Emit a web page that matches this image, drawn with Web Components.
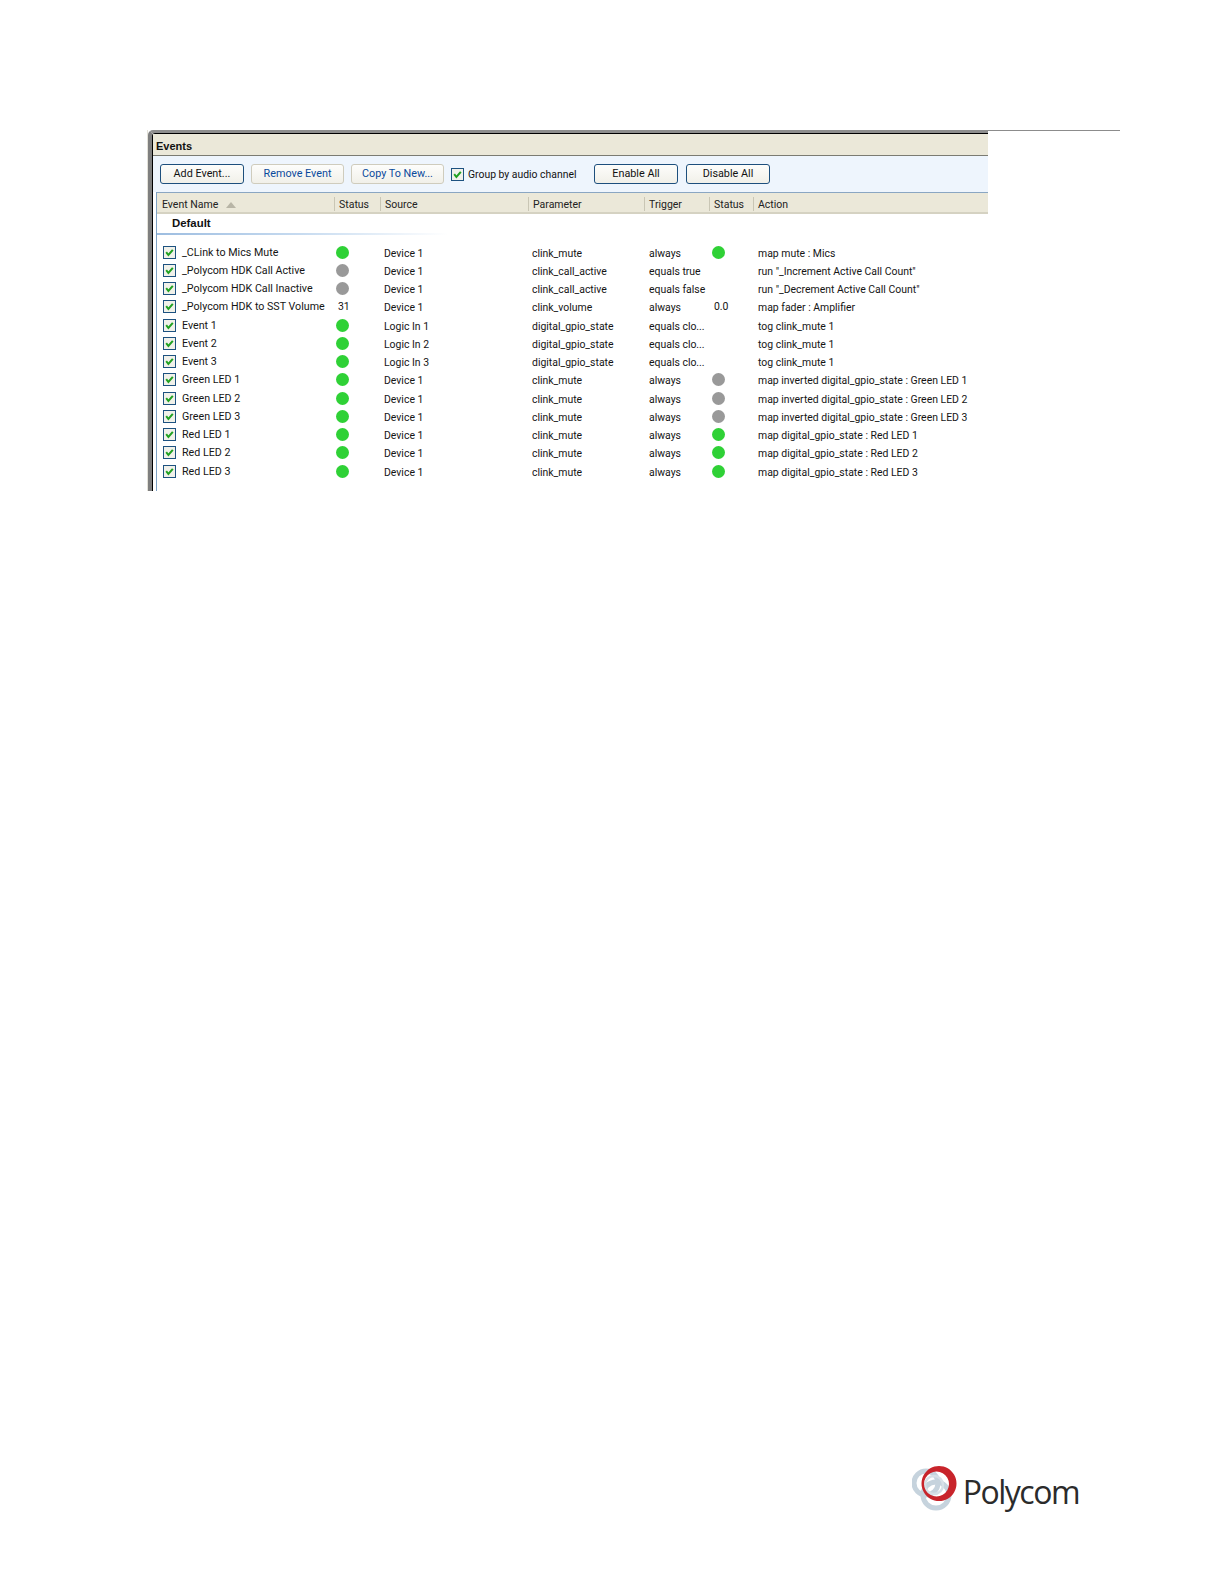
<!DOCTYPE html>
<html>
<head>
<meta charset="utf-8">
<title>Events</title>
<style>
  body{ margin:0; background:#fff; font-family:Roboto,"Liberation Sans",Arial,sans-serif; }
</style>
</head>
<body>
<polycom-page>
  <events-window>
    <tool-btn slot="tools" primary>Add Event...</tool-btn>
    <tool-btn slot="tools" w="93" off>Remove Event</tool-btn>
    <tool-btn slot="tools" w="93" off>Copy To New...</tool-btn>
    <group-check slot="tools">Group by audio channel</group-check>
    <tool-btn slot="tools" primary w="84" gap="18">Enable All</tool-btn>
    <tool-btn slot="tools" primary w="84">Disable All</tool-btn>

    <event-row name="_CLink to Mics Mute" st="on" src="Device 1" par="clink_mute" trig="always" st2="on" act="map mute : Mics"></event-row>
    <event-row name="_Polycom HDK Call Active" st="off" src="Device 1" par="clink_call_active" trig="equals true" act="run &quot;_Increment Active Call Count&quot;"></event-row>
    <event-row name="_Polycom HDK Call Inactive" st="off" src="Device 1" par="clink_call_active" trig="equals false" act="run &quot;_Decrement Active Call Count&quot;"></event-row>
    <event-row name="_Polycom HDK to SST Volume" val="31" src="Device 1" par="clink_volume" trig="always" val2="0.0" act="map fader : Amplifier"></event-row>
    <event-row name="Event 1" st="on" src="Logic In 1" par="digital_gpio_state" trig="equals clo..." act="tog clink_mute 1"></event-row>
    <event-row name="Event 2" st="on" src="Logic In 2" par="digital_gpio_state" trig="equals clo..." act="tog clink_mute 1"></event-row>
    <event-row name="Event 3" st="on" src="Logic In 3" par="digital_gpio_state" trig="equals clo..." act="tog clink_mute 1"></event-row>
    <event-row name="Green LED 1" st="on" src="Device 1" par="clink_mute" trig="always" st2="off" act="map inverted digital_gpio_state : Green LED 1"></event-row>
    <event-row name="Green LED 2" st="on" src="Device 1" par="clink_mute" trig="always" st2="off" act="map inverted digital_gpio_state : Green LED 2"></event-row>
    <event-row name="Green LED 3" st="on" src="Device 1" par="clink_mute" trig="always" st2="off" act="map inverted digital_gpio_state : Green LED 3"></event-row>
    <event-row name="Red LED 1" st="on" src="Device 1" par="clink_mute" trig="always" st2="on" act="map digital_gpio_state : Red LED 1"></event-row>
    <event-row name="Red LED 2" st="on" src="Device 1" par="clink_mute" trig="always" st2="on" act="map digital_gpio_state : Red LED 2"></event-row>
    <event-row name="Red LED 3" st="on" src="Device 1" par="clink_mute" trig="always" st2="on" act="map digital_gpio_state : Red LED 3"></event-row>
  </events-window>
  <polycom-logo slot="logo"></polycom-logo>
</polycom-page>

<script>
const COLS = "177px 46px 148px 116px 65px 44px 1fr";

class PolycomPage extends HTMLElement{
    constructor(){
        super()
        this.attachShadow({ mode: "open" });
        this.shadowRoot.innerHTML = `
          <style>
            :host{ display:flex; flex-direction:column; height:1585px; box-sizing:border-box; padding:130px 105px 72px 147px; overflow:hidden; }
            .top{ display:flex; align-items:flex-start; }
            .rule{ flex:1; height:1px; background:#8c8c8c; }
            .bottom{ margin-top:auto; display:flex; justify-content:flex-end; margin-right:41px; }
          </style>
          <div class="top"><slot></slot><div class="rule"></div></div>
          <div class="bottom"><slot name="logo"></slot></div>
        `;
    }
}

class EventsWindow extends HTMLElement{
    constructor(){
        super()
        this.attachShadow({ mode: "open" });
        const heads = [["Event Name",true],["Status"],["Source"],["Parameter"],["Trigger"],["Status"],["Action"]]
        const cells = heads.map(h => `<div class="hc">${h[0]}${h[1] ? '<svg width="10" height="6" viewBox="0 0 10 6"><path d="M0 6L5 0L10 6Z" fill="#b8b5a6"/></svg>' : ''}</div>`).join("")
        this.shadowRoot.innerHTML = `
          <style>
            :host{ display:block; width:841px; height:361px; box-sizing:border-box; font-size:10.5px; color:#111; flex:none;
                   background:#fff; border-left:1px solid #e3e1d8; overflow:hidden; }
            .frame{ height:100%; box-sizing:border-box; border-top:3px solid #8e8e8e; border-left:4px solid #7f7f7f; border-top-left-radius:5px; }
            .inner{ height:100%; box-sizing:border-box; border-top:1px solid #000; border-left:1px solid #000; border-top-left-radius:3px; }
            .title{ height:21px; background:#ebe8d9; border-bottom:1px solid #7b7b72; font:bold 11px "Liberation Sans",Arial,sans-serif;
                    line-height:24px; padding-left:3px; box-sizing:content-box; }
            .body{ margin-left:3px; border-left:1px solid #7fa2c4; height:100%; }
            .tools{ height:36px; background:#eef5fd; display:flex; align-items:center; margin-left:-4px; padding-left:7px; box-sizing:border-box; }
            .head{ display:grid; grid-template-columns:${COLS}; height:19px; background:#ebe8d9; border-top:1px solid #8aa6c2;
                   border-bottom:2px solid #d5d2c2; box-sizing:content-box; }
            .hc{ padding-left:4px; border-left:1px solid #c9c6b5; height:14px; margin-top:4px; line-height:14px; padding-top:1px; box-sizing:border-box; color:#222; white-space:nowrap; display:flex; align-items:center; gap:8px; }
            .hc:first-child{ border-left:0; padding-left:5px; }
            .group{ height:19px; font:bold 11.4px/18px "Liberation Sans",Arial,sans-serif; padding-left:15px;
                    border-bottom:2px solid; border-image:linear-gradient(90deg,#9dbde0,#c7dbf0 50%,#fff) 1; width:275px; }
            .rows{ padding-top:9px; }
          </style>
          <div class="frame"><div class="inner">
            <div class="title">Events</div>
            <div class="body">
              <div class="tools"><slot name="tools"></slot></div>
              <div class="head">${cells}</div>
              <div class="group">Default</div>
              <div class="rows"><slot></slot></div>
            </div>
          </div></div>
        `;
    }
}

class ToolBtn extends HTMLElement{
    constructor(){
        super()
        this.attachShadow({ mode: "open" });
        const w = this.getAttribute("w") || 84
        const gap = this.getAttribute("gap") || 7
        const off = this.hasAttribute("off")
        this.shadowRoot.innerHTML = `
          <style>
            :host{ display:block; flex:none; margin-right:${gap == 18 ? 8 : 7}px; margin-top:-1px; }
            button{ all:unset; display:block; box-sizing:border-box; width:${w}px; height:20px; text-align:center; font:10.8px/16px Roboto,"Liberation Sans",sans-serif;
                    border-radius:3px; background:linear-gradient(#fdfdfb,#f1f0e9);
                    color:${off ? "#0a4a9c" : "#111"}; border:1px solid ${off ? "#cfccbd" : "#1d4f7d"}; }
          </style>
          <button><slot></slot></button>
        `;
    }
}

class GroupCheck extends HTMLElement{
    constructor(){
        super()
        this.attachShadow({ mode: "open" });
        this.shadowRoot.innerHTML = `
          <style>
            :host{ display:flex; align-items:center; flex:none; width:143px; gap:4px; font-size:10.4px; color:#111; white-space:nowrap; }
          </style>
          <check-box></check-box><span><slot></slot></span>
        `;
    }
}

class CheckBox extends HTMLElement{
    constructor(){
        super()
        this.attachShadow({ mode: "open" });
        this.shadowRoot.innerHTML = `
          <style>
            :host{ display:block; width:13px; height:13px; flex:none; }
            svg{ display:block; }
          </style>
          <svg width="13" height="13" viewBox="0 0 13 13">
            <rect x=".5" y=".5" width="12" height="12" fill="#f1f1ea" stroke="#1d5280"/>
            <path d="M3.2 6.2L5.4 9L9.8 3.8" fill="none" stroke="#21a121" stroke-width="2"/>
          </svg>
        `;
    }
}

class StatusDot extends HTMLElement{
    constructor(){
        super()
        this.attachShadow({ mode: "open" });
        this.shadowRoot.innerHTML = `
          <style>
            :host{ display:block; width:13px; height:13px; border-radius:50%; background:#2fd136; }
            :host([kind="off"]){ background:#999999; }
          </style>
        `;
    }
}

class EventRow extends HTMLElement{
    constructor(){
        super()
        this.attachShadow({ mode: "open" });
        const a = n => this.getAttribute(n)
        const esc = s => (s || "").replace(/"/g, "&quot;")
        const status = (st, val) => st ? `<status-dot kind="${st}"></status-dot>` : `<span class="num">${val || ""}</span>`
        this.shadowRoot.innerHTML = `
          <style>
            :host{ display:grid; grid-template-columns:${COLS}; height:18.25px; align-items:center; font-size:10.45px; color:#151515; white-space:nowrap; }
            .name{ display:flex; align-items:center; gap:6px; padding-left:6px; margin-top:-2px; font-size:10.7px; }
            .st{ padding-left:2px; margin-top:-2px; }
            .st.two{ padding-left:3px; }
            .num{ padding-left:2px; }
            .c{ padding-left:4px; }
            .c.r{ padding-left:5px; }
          </style>
          <div class="name"><check-box></check-box><span>${esc(a("name"))}</span></div>
          <div class="st">${status(a("st"), a("val"))}</div>
          <div class="c">${esc(a("src"))}</div>
          <div class="c">${esc(a("par"))}</div>
          <div class="c r">${esc(a("trig"))}</div>
          <div class="st two">${status(a("st2"), a("val2"))}</div>
          <div class="c r">${esc(a("act"))}</div>
        `;
    }
}

class PolycomLogo extends HTMLElement{
    constructor(){
        super()
        this.attachShadow({ mode: "open" });
        this.shadowRoot.innerHTML = `
          <style>
            :host{ display:flex; align-items:center; gap:1px; height:48px; }
            span{ font:400 32px/1 "Open Sans",sans-serif; color:#2b2b2b; letter-spacing:-1.5px; padding-top:6px; }
            svg{ display:block; }
          </style>
          <svg width="50" height="48" viewBox="0 0 50 48">
            <circle cx="14" cy="18" r="12" fill="none" stroke="#c6d3dd" stroke-width="5"/>
            <circle cx="24" cy="30" r="13" fill="none" stroke="#c6d3dd" stroke-width="5"/>
            <circle cx="22" cy="20" r="9" fill="none" stroke="#d7e0e7" stroke-width="2.5"/>
            <path fill-rule="evenodd" fill="#c8242b" d="M27 1a17.5 17.5 0 1 0 .01 0ZM24.5 6.5a12.5 12.5 0 1 1-.01 0Z"/>
          </svg>
          <span>Polycom</span>
        `;
    }
}

customElements.define("check-box", CheckBox);
customElements.define("status-dot", StatusDot);
customElements.define("tool-btn", ToolBtn);
customElements.define("group-check", GroupCheck);
customElements.define("event-row", EventRow);
customElements.define("events-window", EventsWindow);
customElements.define("polycom-logo", PolycomLogo);
customElements.define("polycom-page", PolycomPage);
</script>
</body>
</html>
